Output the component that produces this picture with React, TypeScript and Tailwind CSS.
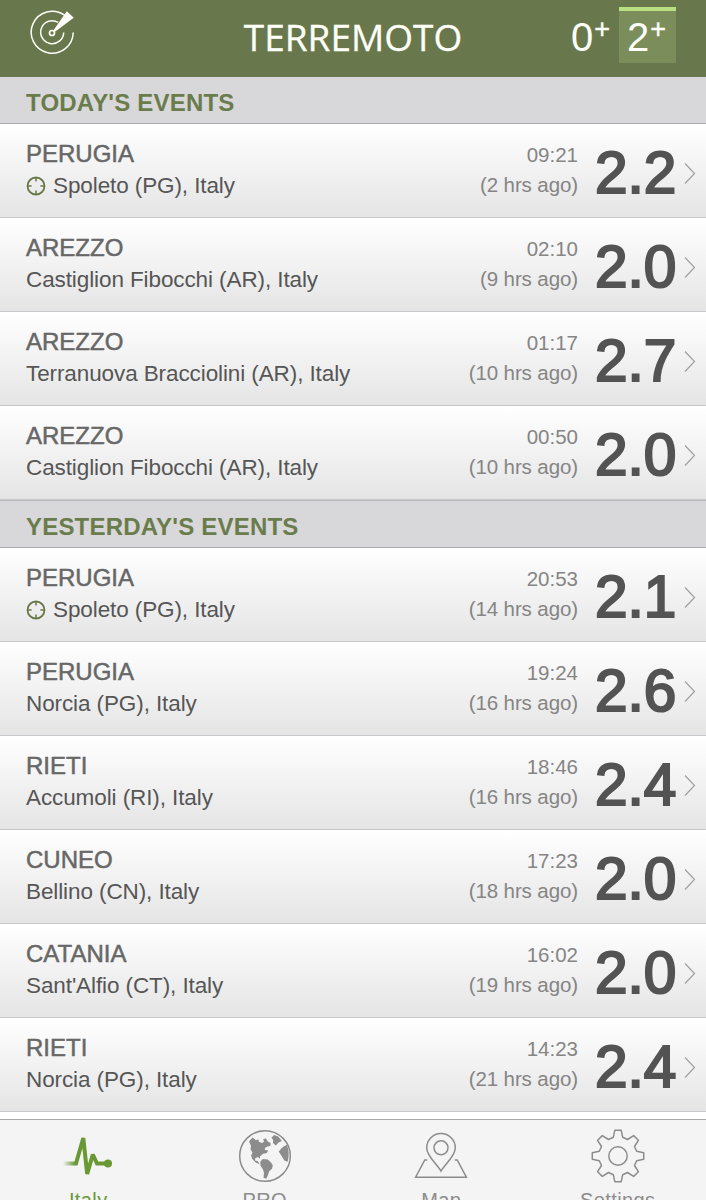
type Quake = {
  area: string;
  place: string;
  time: string;
  ago: string;
  magnitude: string;
  nearby?: boolean;
};

const today: Quake[] = [
  { area: "PERUGIA", place: "Spoleto (PG), Italy", time: "09:21", ago: "(2 hrs ago)", magnitude: "2.2", nearby: true },
  { area: "AREZZO", place: "Castiglion Fibocchi (AR), Italy", time: "02:10", ago: "(9 hrs ago)", magnitude: "2.0" },
  { area: "AREZZO", place: "Terranuova Bracciolini (AR), Italy", time: "01:17", ago: "(10 hrs ago)", magnitude: "2.7" },
  { area: "AREZZO", place: "Castiglion Fibocchi (AR), Italy", time: "00:50", ago: "(10 hrs ago)", magnitude: "2.0" },
];

const yesterday: Quake[] = [
  { area: "PERUGIA", place: "Spoleto (PG), Italy", time: "20:53", ago: "(14 hrs ago)", magnitude: "2.1", nearby: true },
  { area: "PERUGIA", place: "Norcia (PG), Italy", time: "19:24", ago: "(16 hrs ago)", magnitude: "2.6" },
  { area: "RIETI", place: "Accumoli (RI), Italy", time: "18:46", ago: "(16 hrs ago)", magnitude: "2.4" },
  { area: "CUNEO", place: "Bellino (CN), Italy", time: "17:23", ago: "(18 hrs ago)", magnitude: "2.0" },
  { area: "CATANIA", place: "Sant'Alfio (CT), Italy", time: "16:02", ago: "(19 hrs ago)", magnitude: "2.0" },
  { area: "RIETI", place: "Norcia (PG), Italy", time: "14:23", ago: "(21 hrs ago)", magnitude: "2.4" },
];

const RadarIcon = () => (
  <svg width="46" height="46" viewBox="0 0 46 46" fill="none" stroke="#fdfff8" strokeWidth="1.5">
    <path d="M34.5 5.2A21 21 0 1 0 43.2 22.5" />
    <path d="M28.2 12.4A11.5 11.5 0 1 0 33.7 22.5" />
    <circle cx="22" cy="23" r="2.5" strokeWidth="1.7" />
    <path d="M23.5 20.2 36.8 1.2 43.8 7.7 25 21.8Z" fill="#fdfff8" stroke="none" />
  </svg>
);

const TargetIcon = () => (
  <svg width="20" height="20" viewBox="0 0 20 20" fill="none" stroke="#68784a" strokeWidth="1.8">
    <circle cx="10" cy="10" r="8.5" />
    <path d="M10 2v3.6M10 14.4V18M2 10h3.6M14.4 10H18" strokeWidth="1.5" />
  </svg>
);

const PulseIcon = () => (
  <svg width="50" height="44" viewBox="0 0 50 44" fill="none">
    <defs>
      <linearGradient id="pulse-fade" gradientUnits="userSpaceOnUse" x1="0" y1="0" x2="12" y2="0">
        <stop offset="0" stopColor="#699834" stopOpacity="0" />
        <stop offset="1" stopColor="#699834" />
      </linearGradient>
    </defs>
    <path d="M0 29.5H13L20.3 4 24.2 40 29.8 20.5 34 29.5H45" stroke="url(#pulse-fade)" strokeWidth="4" strokeMiterlimit="2" />
    <circle cx="45" cy="29.5" r="4" fill="#699834" />
  </svg>
);

const GlobeIcon = () => (
  <svg width="54" height="54" viewBox="0 0 54 54">
    <circle cx="27" cy="27" r="25.3" fill="none" stroke="#8c8c8c" strokeWidth="1.5" />
    <g fill="#8c8c8c">
      <path d="M11 12.5 14.500 8.500l3.500 2.700 2.300-1 .6 2.500 3 1.400 2.200-1.500-1-2.500 2.800-.5 1.900 2.800 2.800 1.500-.2 3-3 .6-2.400 1.500-.2 2 3.300.2-1.200 2.700-3.800.8-3.200 2.800.2 2.200-2.300-1.600-2.800 1.400.2 2 2.600.7 1.900 3.100-3.600-1.500-4-4-1-3.600 1.400-2.500-2-3.500.5-3.500Z" />
      <path d="M33.500 8.800 36 6l4.300 1.400 3.500 4.600-3.200 1.400-2.800 3.100-2.800-2.600.2-3Z" />
      <path d="m40.700 22.500 3.500-4 4.600-2.800c1.900 4.400 2.700 11.700.7 17l-3.200-1.200-3-5Z" />
      <path d="m22.400 32.500 2.400-2.500 5 .5 3.200 3 1.800 2.700-.8 3.600-2.800 2.500-1.500 4.400-1.500 3-2.700-1 .5-5-1.100-3.500-2.500-3.800Z" />
    </g>
  </svg>
);

const MapIcon = () => (
  <svg width="54" height="48" viewBox="0 0 54 48" fill="none" stroke="#8c8c8c" strokeWidth="1.5">
    <path d="M27 39.2C23 31.8 12.7 24.6 12.7 15.8a14.3 14.3 0 0 1 28.6 0C41.3 24.6 31 31.800 27 39.200Z" />
    <circle cx="27" cy="15.8" r="7" />
    <path d="M13.2 28H10.8L1.6 45.2H52.4L43.2 28H40.8" />
  </svg>
);

const GearIcon = () => (
  <svg width="54" height="54" viewBox="0 0 54 54" fill="none" stroke="#8c8c8c" strokeWidth="1.5" strokeLinejoin="round">
    <path d="M23.8 1.300h6.400l1.500 7 4.800 2.200 6.200-3.900 4.700 4.700-3.900 6.200 2.200 4.800 7 1.500v6.400l-7 1.500-2.200 4.800 3.900 6.200-4.700 4.700-6.200-3.900-4.800 2.200-1.500 7h-6.400l-1.500-7-4.800-2.200-6.200 3.900-4.700-4.700 3.900-6.200-2.200-4.800-7-1.500v-6.400l7-1.500 2.200-4.800-3.900-6.200 4.700-4.700 6.200 3.900 4.800-2.200Z" />
    <circle cx="27" cy="27" r="9.2" />
  </svg>
);

const SectionTitle = ({ title }: { title: string }) => (
  <h2 className="flex h-12 items-center border-y border-t-[#b9b9bc] border-b-[#adadb1] bg-[#d8d7da] px-[26px] pt-[6px] text-2xl leading-6 font-bold tracking-[0.2px] text-[#6a7c4c] first:h-[47px] first:border-t-0">
    {title}
  </h2>
);

const QuakeRow = ({ quake }: { quake: Quake }) => (
  <li className="flex h-[94px] items-start border-b border-[#c8c7cc] bg-linear-to-b from-white to-[#e5e5e5] pl-[26px]">
    <div className="flex-1 pt-4">
      <h3 className="text-2xl leading-7 text-[#676767] [-webkit-text-stroke:0.5px_#676767]">{quake.area}</h3>
      <p className="mt-1 flex items-center gap-[7px] text-[22.5px] leading-7 tracking-[-0.1px] text-[#565656]">
        {quake.nearby && <TargetIcon />}
        {quake.place}
      </p>
    </div>
    <div className="pt-[17px] text-right text-[20.5px] text-[#858585]">
      <p className="leading-7">{quake.time}</p>
      <p className="mt-[2px] leading-7 tracking-[-0.1px]">{quake.ago}</p>
    </div>
    <div className="ml-[17px] w-[84px] pt-[19px] text-[58.5px] leading-[60px] text-[#535353] [-webkit-text-stroke:2.2px_#535353]">
      {quake.magnitude}
    </div>
    <svg className="mt-[38px] mr-[9px] ml-1 shrink-0" width="14" height="23" viewBox="0 0 14 23" fill="none" stroke="#a0a0a0" strokeWidth="1.2">
      <path d="m2 1.500 9.500 10L2 21.500" />
    </svg>
  </li>
);

const QuakeList = ({ quakes }: { quakes: Quake[] }) => (
  <ul>
    {quakes.map((quake) => (
      <QuakeRow key={quake.time} quake={quake} />
    ))}
  </ul>
);

const tabs = [
  { label: "Italy", icon: <PulseIcon />, active: true },
  { label: "PRO", icon: <GlobeIcon /> },
  { label: "Map", icon: <MapIcon /> },
  { label: "Settings", icon: <GearIcon /> },
];

const App = () => (
  <div className="flex h-[1200px] w-[706px] flex-col overflow-hidden bg-white font-['Liberation_Sans',Arial,sans-serif]">
    <header className="grid h-[77px] shrink-0 grid-cols-3 bg-[#69784c] text-[#fdfff8]">
      <div className="pt-[10px] pl-[30px]">
        <RadarIcon />
      </div>
      <h1 className="pt-[10px] text-center font-['Open_Sans',sans-serif] text-[37px] leading-[54px] whitespace-nowrap [-webkit-text-stroke:0.3px_#fdfff8]">
        TERREMOTO
      </h1>
      <div className="flex justify-end pt-[7px] pr-[30px] text-[40px] leading-[53px]">
        <button className="flex h-14 w-[48px] items-start pt-1">
          0<span className="pl-px text-[27px] leading-[37px] [-webkit-text-stroke:0.4px_#fdfff8]">+</span>
        </button>
        <button className="flex h-14 w-[57px] items-start border-t-4 border-[#b9df83] bg-[#7b8d5b] pl-2">
          2<span className="pl-px text-[27px] leading-[37px] [-webkit-text-stroke:0.4px_#fdfff8]">+</span>
        </button>
      </div>
    </header>

    <main className="shrink-0">
      <SectionTitle title="TODAY'S EVENTS" />
      <QuakeList quakes={today} />
      <SectionTitle title="YESTERDAY'S EVENTS" />
      <QuakeList quakes={yesterday} />
    </main>

    <nav className="mt-[7px] grid h-[81px] shrink-0 grid-cols-4 border-t border-[#a9a9a9] bg-[#f4f4f4] text-[#8c8c8c]">
      {tabs.map((tab) => (
        <button key={tab.label} className={tab.active ? "flex flex-col items-center text-[#699834]" : "flex flex-col items-center"}>
          <span className="flex h-[71px] shrink-0 items-center">{tab.icon}</span>
          <span className="-mt-[3px] text-[20px] leading-6 tracking-[0.4px]">{tab.label}</span>
        </button>
      ))}
    </nav>
  </div>
);

export default App;
